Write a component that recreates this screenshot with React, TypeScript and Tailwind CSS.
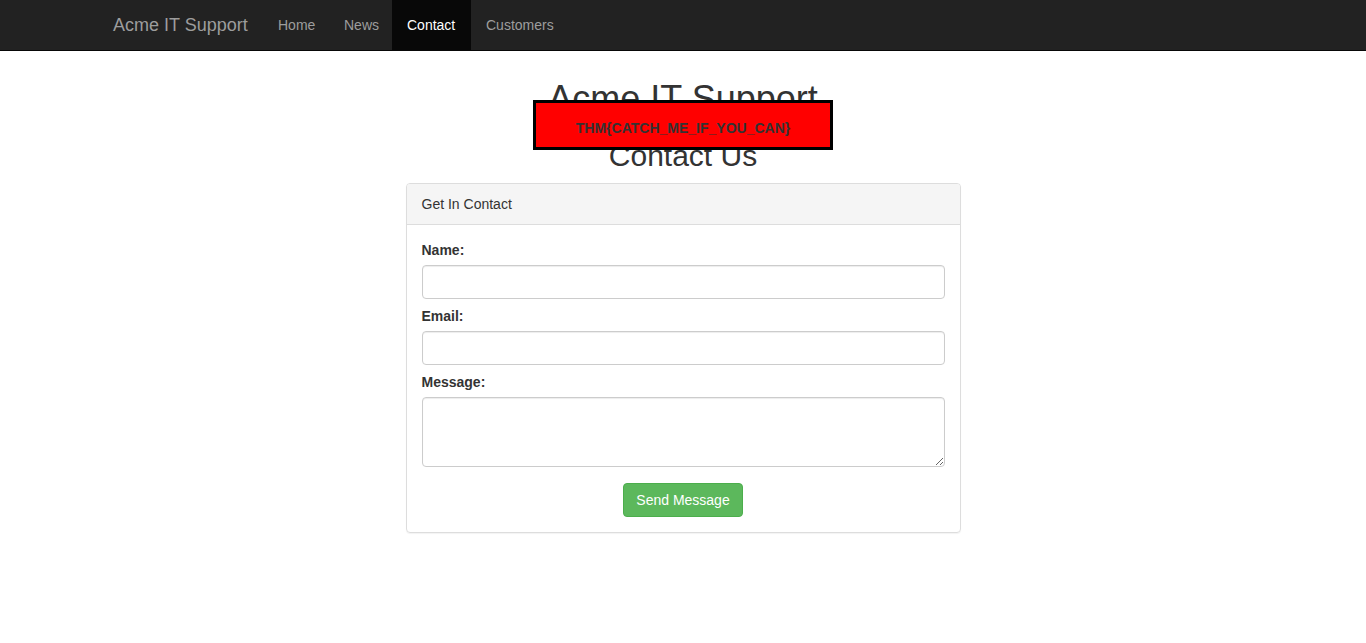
import React from 'react'

export default function App() {
  return (
    <div className="min-h-[643px] bg-white text-[#333] text-[14px] leading-[20px] font-['Liberation_Sans',Arial,sans-serif]">
      {/* Navbar */}
      <nav className="h-[51px] bg-[#222] border-b border-[#080808]">
        <div className="w-[1170px] mx-auto flex h-[50px]">
          <a href="#" className="w-[165px] px-[15px] h-[50px] flex items-center text-[18px] text-[#9d9d9d]">
            Acme IT Support
          </a>
          <a href="#" className="w-[66px] px-[15px] h-[50px] flex items-center text-[#9d9d9d]">
            Home
          </a>
          <a href="#" className="w-[63px] px-[15px] h-[50px] flex items-center text-[#9d9d9d]">
            News
          </a>
          <a href="#" className="w-[79px] px-[15px] h-[50px] flex items-center bg-[#080808] text-white">
            Contact
          </a>
          <a href="#" className="px-[15px] h-[50px] flex items-center text-[#9d9d9d]">
            Customers
          </a>
        </div>
      </nav>

      {/* Headings */}
      <div className="relative">
        <h1 className="text-center text-[36px] leading-[40px] font-normal pt-[28px]">Acme IT Support</h1>
        <h2 className="text-center text-[30px] leading-[33px] font-normal mt-[20px]">Contact Us</h2>
        {/* Overlay flag box */}
        <div className="absolute left-1/2 -translate-x-1/2 top-[49px] w-[300px] h-[50px] bg-[#ff0000] border-[3px] border-black pt-[15px] text-center font-bold text-[14px] leading-[20px] text-[#333]">
          THM{'{'}CATCH_ME_IF_YOU_CAN{'}'}
        </div>
      </div>

      {/* Contact panel */}
      <div className="w-[555px] mx-auto mt-[11px] border border-[#ddd] rounded-[4px] shadow-[0_1px_1px_rgba(0,0,0,0.05)]">
        <div className="bg-[#f5f5f5] border-b border-[#ddd] px-[15px] py-[10px] rounded-t-[3px]">
          Get In Contact
        </div>
        <div className="p-[15px]">
          <div className="mb-[7px]">
            <label className="block font-bold mb-[5px]">Name:</label>
            <input
              type="text"
              className="block w-full h-[34px] border border-[#ccc] rounded-[4px] px-[12px] shadow-[inset_0_1px_1px_rgba(0,0,0,0.075)] outline-none"
            />
          </div>
          <div className="mb-[7px]">
            <label className="block font-bold mb-[5px]">Email:</label>
            <input
              type="text"
              className="block w-full h-[34px] border border-[#ccc] rounded-[4px] px-[12px] shadow-[inset_0_1px_1px_rgba(0,0,0,0.075)] outline-none"
            />
          </div>
          <div className="mb-[16px]">
            <label className="block font-bold mb-[5px]">Message:</label>
            <textarea className="block w-full h-[70px] border border-[#ccc] rounded-[4px] px-[12px] py-[6px] shadow-[inset_0_1px_1px_rgba(0,0,0,0.075)] outline-none" />
          </div>
          <div className="flex justify-center">
            <button className="w-[120px] h-[34px] bg-[#5cb85c] border border-[#4cae4c] rounded-[4px] text-white">
              Send Message
            </button>
          </div>
        </div>
      </div>
    </div>
  )
}
